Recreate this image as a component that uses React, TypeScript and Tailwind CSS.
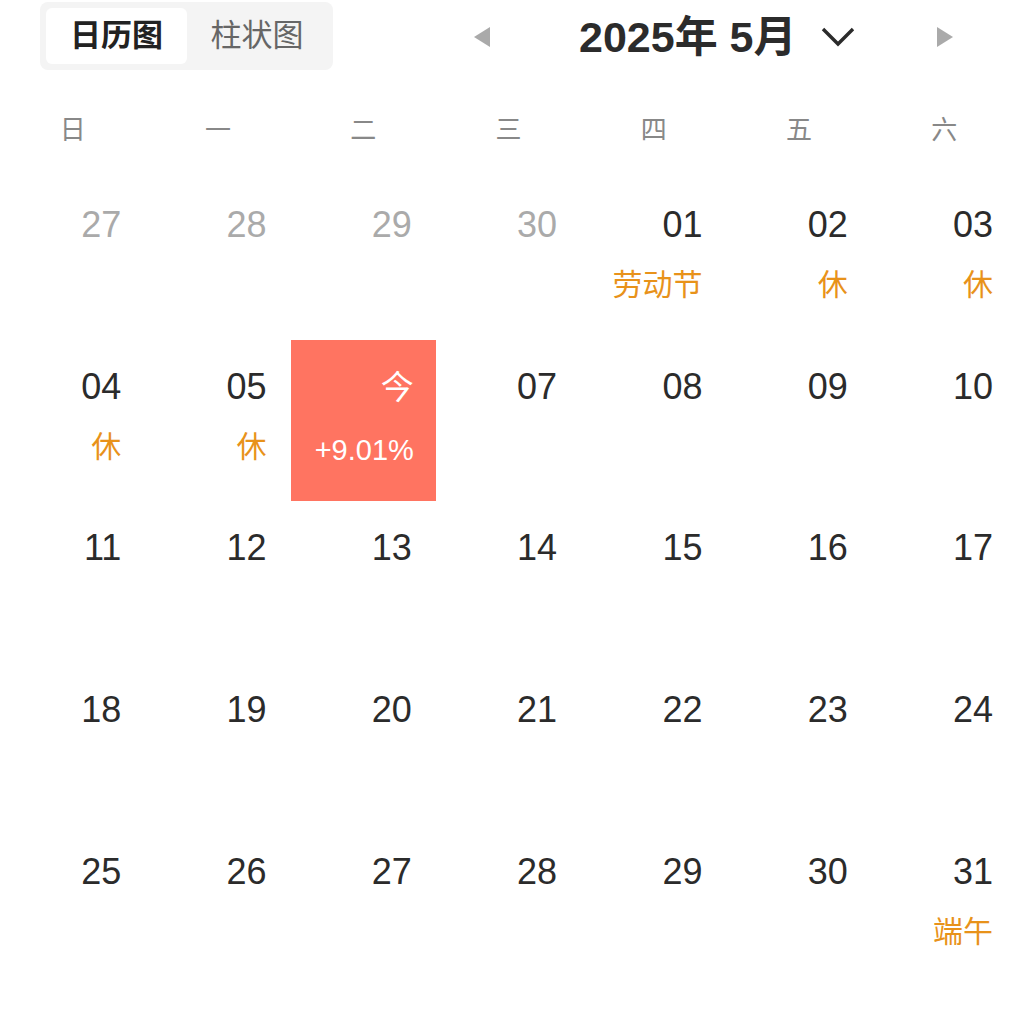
import React from "react";

type Cell = { d: string; muted?: boolean; sub?: string; today?: boolean };

const rows: Cell[][] = [
  [
    { d: "27", muted: true },
    { d: "28", muted: true },
    { d: "29", muted: true },
    { d: "30", muted: true },
    { d: "01", sub: "劳动节" },
    { d: "02", sub: "休" },
    { d: "03", sub: "休" },
  ],
  [
    { d: "04", sub: "休" },
    { d: "05", sub: "休" },
    { d: "今", today: true, sub: "+9.01%" },
    { d: "07" },
    { d: "08" },
    { d: "09" },
    { d: "10" },
  ],
  [{ d: "11" }, { d: "12" }, { d: "13" }, { d: "14" }, { d: "15" }, { d: "16" }, { d: "17" }],
  [{ d: "18" }, { d: "19" }, { d: "20" }, { d: "21" }, { d: "22" }, { d: "23" }, { d: "24" }],
  [{ d: "25" }, { d: "26" }, { d: "27" }, { d: "28" }, { d: "29" }, { d: "30" }, { d: "31", sub: "端午" }],
];

const weekdays = ["日", "一", "二", "三", "四", "五", "六"];

const font = { fontFamily: '"Liberation Sans", "Noto Sans CJK SC", sans-serif' };

export default function App() {
  return (
    <div className="w-[1017px] h-[1024px] bg-white overflow-hidden" style={font}>
      {/* Header */}
      <div className="flex items-start h-[72px]">
        <div className="ml-[40px] mt-[2px] h-[68px] w-[293px] bg-[#f4f4f4] rounded-[8px] p-[6px] flex">
          <div className="w-[141px] h-[56px] bg-white rounded-[6px] flex items-center justify-center text-[31px] font-semibold text-[#222]">
            日历图
          </div>
          <div className="flex-1 h-[56px] flex items-center justify-center text-[31px] text-[#666]">
            柱状图
          </div>
        </div>
        <div className="flex items-center h-[72px] mt-[1px]">
          <svg className="ml-[140px]" width="18" height="22" viewBox="0 0 18 22">
            <path d="M17 1 L1 11 L17 21 Z" fill="#aaaaaa" />
          </svg>
          <div className="ml-[88px] text-[43px] font-bold text-[#2b2b2b] leading-none">
            2025年 5月
          </div>
          <svg className="ml-[24px]" width="34" height="22" viewBox="0 0 34 22">
            <path d="M2 3 L17 18 L32 3" fill="none" stroke="#2b2b2b" strokeWidth="3.4" strokeLinecap="butt" strokeLinejoin="miter" />
          </svg>
          <svg className="ml-[81px]" width="18" height="22" viewBox="0 0 18 22">
            <path d="M1 1 L17 11 L1 21 Z" fill="#aaaaaa" />
          </svg>
        </div>
      </div>

      {/* Weekdays */}
      <div className="grid grid-cols-7 h-[106px] pt-[10px]">
        {weekdays.map((w) => (
          <div key={w} className="flex items-center justify-center text-[26px] text-[#888]">
            {w}
          </div>
        ))}
      </div>

      {/* Grid */}
      <div className="flex flex-col">
        {rows.map((row, ri) => (
          <div key={ri} className="grid grid-cols-7 h-[161.7px]">
            {row.map((c, ci) =>
              c.today ? (
                <div key={ci} className="bg-[#ff7461] flex flex-col items-end pr-[22px]">
                  <div className="pt-[31px] text-[33px] leading-none text-white">{c.d}</div>
                  <div className="mt-[32px] text-[29px] leading-none text-white">{c.sub}</div>
                </div>
              ) : (
                <div key={ci} className="flex flex-col items-end pr-[24px]">
                  <div
                    className={
                      "pt-[29px] text-[36px] leading-none " +
                      (c.muted ? "text-[#aaaaaa]" : "text-[#2b2b2b]")
                    }
                  >
                    {c.d}
                  </div>
                  {c.sub ? (
                    <div className="mt-[27px] text-[30px] leading-none text-[#e8921a]">{c.sub}</div>
                  ) : null}
                </div>
              )
            )}
          </div>
        ))}
      </div>
    </div>
  );
}
